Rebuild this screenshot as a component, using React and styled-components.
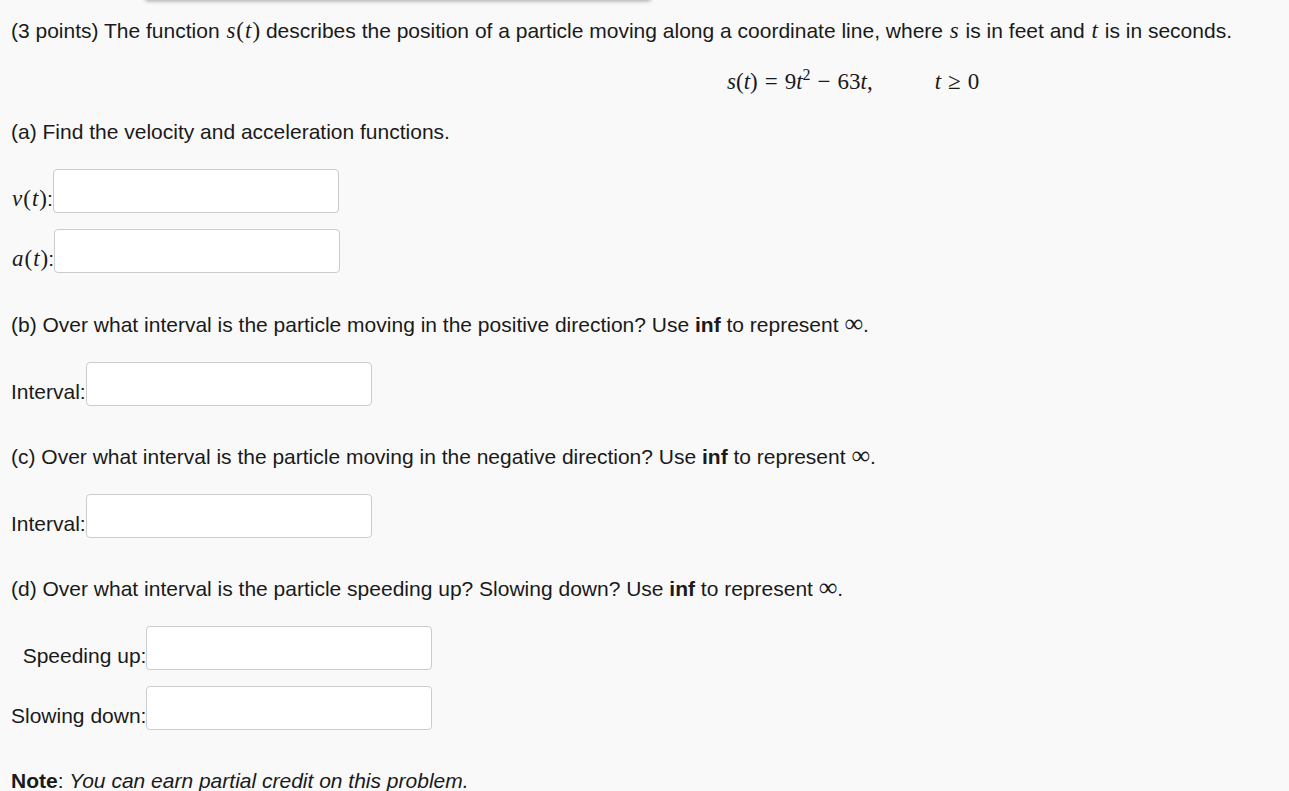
import React from 'react'
import styled, { createGlobalStyle } from 'styled-components'

const GlobalStyle = createGlobalStyle`
  html, body {
    margin: 0;
    padding: 0;
    background: #f9f9f9;
  }
  body {
    font-family: Arial, "Liberation Sans", sans-serif;
    color: #1a1a1a;
  }
`

const Page = styled.div`
  position: relative;
  padding: 19px 11px 0 11px;
  font-size: 21px;
  line-height: 24px;
  height: 791px;
  box-sizing: border-box;
  overflow: hidden;
`

const TopShadow = styled.div`
  position: absolute;
  left: 145px;
  top: -12px;
  width: 506px;
  height: 12px;
  background: #f9f9f9;
  box-shadow: 0 1px 4px rgba(0, 0, 0, 0.35);
  border-radius: 0 0 3px 3px;
`

const Para = styled.p`
  margin: ${(p) => p.$top || 0}px 0 0 0;
  white-space: nowrap;
`

const M = styled.span`
  font-family: "Liberation Serif", "DejaVu Serif", serif;
  font-style: ${(p) => (p.$up ? 'normal' : 'italic')};
  font-size: ${(p) => (p.$big ? 26 : 23)}px;
  padding: 0 ${(p) => (p.$up ? 0 : 1)}px;
`

const Equation = styled.div`
  display: flex;
  gap: 62px;
  margin: 27px 0 0 716px;
  font-family: "Liberation Serif", "DejaVu Serif", serif;
  font-size: 23px;
  white-space: nowrap;
`

const Op = styled.span`
  padding: 0 7px;
`

const Sup = styled.sup`
  font-size: 16px;
  line-height: 0;
`

const Row = styled.div`
  display: flex;
  align-items: flex-end;
  margin-top: ${(p) => p.$top || 0}px;
`

const Label = styled.span`
  padding-bottom: 2px;
  white-space: nowrap;
`

const Input = styled.input`
  width: 286px;
  height: 44px;
  box-sizing: border-box;
  border: 1px solid #cccccc;
  border-radius: 4px;
  background: #ffffff;
  margin: 0;
  padding: 0 8px;
  font-size: 18px;
`

const Grid = styled.div`
  display: grid;
  grid-template-columns: auto auto;
  justify-content: start;
  row-gap: 16px;
  margin-top: 25px;
  align-items: end;
`

const GridLabel = styled.span`
  text-align: right;
  padding-bottom: 2px;
  white-space: nowrap;
`

const Note = styled.p`
  margin: 39px 0 0 0;
  white-space: nowrap;
  em {
    font-style: italic;
  }
`

const App = () => {
  return (
    <>
      <GlobalStyle />
      <Page>
        <TopShadow />
        <Para>
          (3 points) The function <M>s</M><M $up>(</M><M>t</M><M $up>)</M> describes the position of a particle moving
          along a coordinate line, where <M>s</M> is in feet and <M>t</M> is in seconds.
        </Para>
        <Equation>
          <span>
            <i>s</i>(<i>t</i>)<Op>=</Op>9<i>t</i>
            <Sup>2</Sup>
            <Op>−</Op>63<i>t</i>,
          </span>
          <span>
            <i>t</i>
            <Op>≥</Op>0
          </span>
        </Equation>
        <Para $top={26}>(a) Find the velocity and acceleration functions.</Para>
        <Row $top={25}>
          <Label>
            <M>v</M><M $up>(</M><M>t</M><M $up>)</M>:
          </Label>
          <Input />
        </Row>
        <Row $top={16}>
          <Label>
            <M>a</M><M $up>(</M><M>t</M><M $up>)</M>:
          </Label>
          <Input />
        </Row>
        <Para $top={39}>
          (b) Over what interval is the particle moving in the positive direction? Use <b>inf</b> to represent{' '}
          <M $up $big>∞</M>.
        </Para>
        <Row $top={25}>
          <Label>Interval:</Label>
          <Input />
        </Row>
        <Para $top={38}>
          (c) Over what interval is the particle moving in the negative direction? Use <b>inf</b> to represent{' '}
          <M $up $big>∞</M>.
        </Para>
        <Row $top={25}>
          <Label>Interval:</Label>
          <Input />
        </Row>
        <Para $top={38}>
          (d) Over what interval is the particle speeding up? Slowing down? Use <b>inf</b> to represent{' '}
          <M $up $big>∞</M>.
        </Para>
        <Grid>
          <GridLabel>Speeding up:</GridLabel>
          <Input />
          <GridLabel>Slowing down:</GridLabel>
          <Input />
        </Grid>
        <Note>
          <b>Note</b>: <em>You can earn partial credit on this problem.</em>
        </Note>
      </Page>
    </>
  )
}

export default App
